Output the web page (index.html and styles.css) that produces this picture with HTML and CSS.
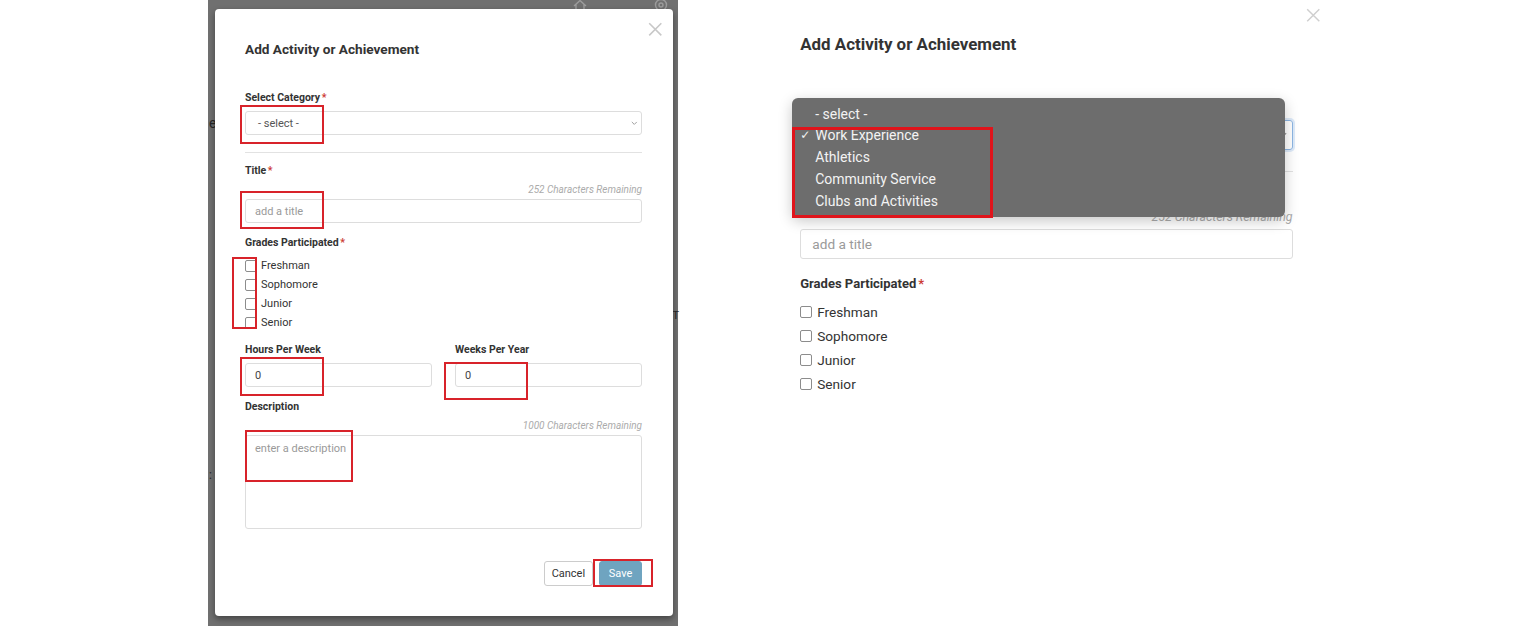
FILE: index.html
```html
<!DOCTYPE html>
<html lang="en">
<head>
    <meta charset="UTF-8">
    <meta name="viewport" content="width=device-width, initial-scale=1.0">
    <title>Add Activity or Achievement</title>
    <link rel="stylesheet" href="styles.css">
</head>
<body>

<div class="page">

    <!-- Left: modal over the dimmed page -->
    <section class="backdrop">
        <svg class="behind-icon behind-home" viewBox="0 0 16 14" fill="none" stroke="currentColor" stroke-width="1.4">
            <path d="M2 7 L8 1.5 L14 7 M4 5.5 V13 H12 V5.5"/>
        </svg>
        <svg class="behind-icon behind-help" viewBox="0 0 14 14" fill="none" stroke="currentColor" stroke-width="1.4">
            <circle cx="7" cy="7" r="5.5"/>
            <circle cx="7" cy="7" r="2"/>
        </svg>
        <span class="behind-text behind-e">e</span>
        <span class="behind-text behind-t">T</span>
        <span class="behind-text behind-colon">:</span>

        <div class="modal">
            <button class="modal-close" aria-label="Close">
                <svg viewBox="0 0 12 12" fill="none" stroke="currentColor" stroke-width="1.3">
                    <path d="M1 1 L11 11 M11 1 L1 11"/>
                </svg>
            </button>

            <h2 class="modal-title">Add Activity or Achievement</h2>

            <div class="field field-category">
                <label class="field-label">Select Category<span class="req">*</span></label>
                <div class="control">
                    <div class="select">
                        <span>- select -</span>
                        <svg class="select-caret" viewBox="0 0 8 5" fill="none" stroke="currentColor" stroke-width="1">
                            <path d="M1 1 L4 4 L7 1"/>
                        </svg>
                    </div>
                    <span class="mark mark-category"></span>
                </div>
            </div>

            <hr class="divider">

            <div class="field">
                <label class="field-label">Title<span class="req">*</span></label>
                <div class="counter">252 Characters Remaining</div>
                <div class="control">
                    <input type="text" class="text-input" placeholder="add a title">
                    <span class="mark mark-title"></span>
                </div>
            </div>

            <div class="field field-grades">
                <label class="field-label">Grades Participated<span class="req">*</span></label>
                <div class="checks">
                    <label class="check"><input type="checkbox"> Freshman</label>
                    <label class="check"><input type="checkbox"> Sophomore</label>
                    <label class="check"><input type="checkbox"> Junior</label>
                    <label class="check"><input type="checkbox"> Senior</label>
                    <span class="mark mark-checks"></span>
                </div>
            </div>

            <div class="field field-row">
                <div>
                    <label class="field-label">Hours Per Week</label>
                    <div class="control">
                        <input type="text" class="text-input" value="0">
                        <span class="mark mark-hours"></span>
                    </div>
                </div>
                <div>
                    <label class="field-label">Weeks Per Year</label>
                    <div class="control">
                        <input type="text" class="text-input" value="0">
                        <span class="mark mark-weeks"></span>
                    </div>
                </div>
            </div>

            <div class="field field-last">
                <label class="field-label">Description</label>
                <div class="counter">1000 Characters Remaining</div>
                <div class="control">
                    <textarea class="text-input text-area" placeholder="enter a description"></textarea>
                    <span class="mark mark-description"></span>
                </div>
            </div>

            <div class="modal-footer">
                <button class="btn">Cancel</button>
                <button class="btn btn-primary">Save</button>
                <span class="mark mark-save"></span>
            </div>
        </div>
    </section>

    <!-- Right: close-up of the category dropdown -->
    <section class="zoom-view">
        <div class="modal modal-lg">
            <button class="modal-close" aria-label="Close">
                <svg viewBox="0 0 12 12" fill="none" stroke="currentColor" stroke-width="1.2">
                    <path d="M1 1 L11 11 M11 1 L1 11"/>
                </svg>
            </button>

            <h2 class="modal-title">Add Activity or Achievement</h2>

            <div class="field field-category">
                <!-- label and value sit under the open menu -->
                <label class="field-label is-covered">Select Category<span class="req">*</span></label>
                <div class="control">
                    <div class="select select-focus">
                        <span class="is-covered">- select -</span>
                        <svg class="select-caret" viewBox="0 0 8 5" fill="none" stroke="currentColor" stroke-width="1">
                            <path d="M1 1 L4 4 L7 1"/>
                        </svg>
                    </div>

                    <ul class="dropdown">
                        <li class="option">- select -</li>
                        <li class="option"><span class="option-check">&#10003;</span>Work Experience</li>
                        <li class="option">Athletics</li>
                        <li class="option">Community Service</li>
                        <li class="option">Clubs and Activities</li>
                        <li class="dropdown-mark"></li>
                    </ul>
                </div>
            </div>

            <hr class="divider">

            <div class="field">
                <label class="field-label is-covered">Title<span class="req">*</span></label>
                <div class="counter">252 Characters Remaining</div>
                <div class="control">
                    <input type="text" class="text-input" placeholder="add a title">
                </div>
            </div>

            <div class="field field-grades">
                <label class="field-label">Grades Participated<span class="req">*</span></label>
                <div class="checks checks-lg">
                    <label class="check"><input type="checkbox"> Freshman</label>
                    <label class="check"><input type="checkbox"> Sophomore</label>
                    <label class="check"><input type="checkbox"> Junior</label>
                    <label class="check"><input type="checkbox"> Senior</label>
                </div>
            </div>
        </div>
    </section>

</div>

</body>
</html>
```

FILE: styles.css
```css
body {
    margin: 0;
    font-family: Roboto, 'Liberation Sans', Arial, sans-serif;
    color: #333;
    background-color: #fff;
}

.page {
    display: flex;
    align-items: flex-start;
    height: 626px;
    padding-left: 208px;
    overflow: hidden;
}

/* ---------- dimmed page behind the modal ---------- */

.backdrop {
    position: relative;
    flex: none;
    width: 470px;
    height: 626px;
    box-sizing: border-box;
    padding: 9px 5px 0 7px;
    background-color: #707070;
}

.behind-icon {
    position: absolute;
    color: #9c9c9c;
}

.behind-home {
    top: -1px;
    left: 364px;
    width: 16px;
    height: 14px;
}

.behind-help {
    top: -2px;
    left: 446px;
    width: 14px;
    height: 14px;
}

.behind-text {
    position: absolute;
    font-size: 14px;
    color: #262626;
}

.behind-e {
    top: 115px;
    left: 1px;
}

.behind-t {
    top: 309px;
    right: -1px;
    font-size: 11px;
}

.behind-colon {
    top: 468px;
    left: 1px;
    font-size: 12px;
}

/* ---------- modal ---------- */

.modal {
    position: relative;
    z-index: 1;
    box-sizing: border-box;
    width: 41.64em;
    padding: 2.818em 2.818em 2.727em 2.727em;
    background-color: #fff;
    border-radius: 4px;
    box-shadow: 0 3px 6px rgba(0, 0, 0, 0.4);
    font-size: 11px;
}

.modal-close {
    position: absolute;
    top: 1em;
    right: 0.818em;
    width: 1.09em;
    height: 1.09em;
    padding: 0;
    border: none;
    background: none;
    color: #c8c8c8;
}

.modal-close svg {
    display: block;
    width: 100%;
    height: 100%;
}

.modal-title {
    margin: 0 0 2.296em;
    font-size: 1.24em;
    line-height: 1.466;
    font-weight: 700;
    color: #333;
}

.field {
    margin-bottom: 1.182em;
}

.field-category {
    margin-bottom: 0;
}

.field-grades {
    margin-bottom: 1em;
}

.field-last {
    margin-bottom: 0;
}

.field-row {
    display: grid;
    grid-template-columns: 1fr 1fr;
    column-gap: 2.09em;
}

.field-label {
    display: block;
    margin-bottom: 0.571em;
    font-size: 0.955em;
    line-height: 1.333;
    font-weight: 700;
    color: #333;
}

.req {
    margin-left: 0.15em;
    color: #cc3a33;
}

.is-covered {
    visibility: hidden;
}

.counter {
    margin-bottom: 0.3em;
    font-size: 0.909em;
    line-height: 1.2;
    font-style: italic;
    color: #ababab;
    text-align: right;
}

.control {
    position: relative;
}

.select {
    display: flex;
    align-items: center;
    justify-content: space-between;
    box-sizing: border-box;
    height: 2.182em;
    padding: 0 0.3em 0 1.09em;
    border: 1px solid #ddd;
    border-radius: 3px;
    color: #555;
}

.select-caret {
    width: 0.6em;
    height: 0.4em;
    color: #8a8a8a;
}

.select-focus {
    border-color: #8db6e4;
    box-shadow: 0 0 0 2px rgba(120, 170, 230, 0.25);
}

.divider {
    margin: 1.545em 0 1em;
    border: none;
    border-top: 1px solid #e2e2e2;
}

.text-input {
    display: block;
    box-sizing: border-box;
    width: 100%;
    height: 2.182em;
    margin: 0;
    padding: 0 0.818em;
    border: 1px solid #ddd;
    border-radius: 3px;
    font: inherit;
    color: #444;
    background-color: #fff;
}

.text-input::placeholder {
    color: #9a9a9a;
}

.text-area {
    height: 8.545em;
    padding-top: 0.5em;
    resize: none;
}

.checks {
    position: relative;
}

.check {
    display: flex;
    align-items: center;
    gap: 0.36em;
    height: 1.727em;
    color: #333;
}

.checks-lg .check {
    height: 1.76em;
}

.check input {
    appearance: none;
    flex: none;
    width: 0.909em;
    height: 0.909em;
    margin: 0;
    border: 1px solid #8c8c8c;
    border-radius: 2px;
    background-color: #fff;
}

.modal-footer {
    position: relative;
    display: flex;
    justify-content: flex-end;
    gap: 0.545em;
    margin-top: 2.909em;
}

.btn {
    height: 2.273em;
    padding: 0 0.62em;
    border: 1px solid #ccc;
    border-radius: 3px;
    background-color: #fff;
    font: inherit;
    color: #333;
}

.btn-primary {
    padding: 0 0.8em;
    border-color: #6fa4c0;
    background-color: #6fa4c0;
    color: #fff;
}

/* ---------- red annotation boxes ---------- */

.mark {
    position: absolute;
    box-sizing: border-box;
    border: 2px solid #d8232a;
    pointer-events: none;
}

.mark-category { left: -5px; top: -6px; width: 84px; height: 39px; }
.mark-title { left: -5px; top: -8px; width: 84px; height: 38px; }
.mark-checks { left: -13px; top: 1px; width: 25px; height: 72px; }
.mark-hours { left: -5px; top: -6px; width: 84px; height: 39px; }
.mark-weeks { left: -11px; top: -1px; width: 84px; height: 38px; }
.mark-description { left: 0; top: -5px; width: 108px; height: 52px; }
.mark-save { right: -11px; top: -2px; width: 60px; height: 28px; }

/* ---------- close-up on the right ---------- */

.zoom-view {
    flex: none;
    margin-left: 85px;
    margin-top: -6.6px;
}

.modal-lg {
    font-size: 13.64px;
    box-shadow: none;
}

.modal-lg .modal-close {
    top: 1.07em;
    color: #cfcfcf;
}

.dropdown {
    position: absolute;
    z-index: 2;
    top: -22.6px;
    left: -8px;
    width: 493px;
    margin: 0;
    padding: 6px 0 4px;
    list-style: none;
    background-color: #6d6d6d;
    border-radius: 6px;
    box-shadow: 0 4px 14px rgba(0, 0, 0, 0.22);
    font-size: 14px;
    color: #f3f3f3;
}

.option {
    position: relative;
    padding-left: 23px;
    line-height: 21.8px;
}

.option-check {
    position: absolute;
    left: 8px;
    font-family: 'DejaVu Sans', sans-serif;
    font-size: 12px;
}

.dropdown-mark {
    position: absolute;
    top: 29px;
    left: 0;
    width: 201px;
    height: 91px;
    box-sizing: border-box;
    border: 3px solid #e0141b;
}
```
